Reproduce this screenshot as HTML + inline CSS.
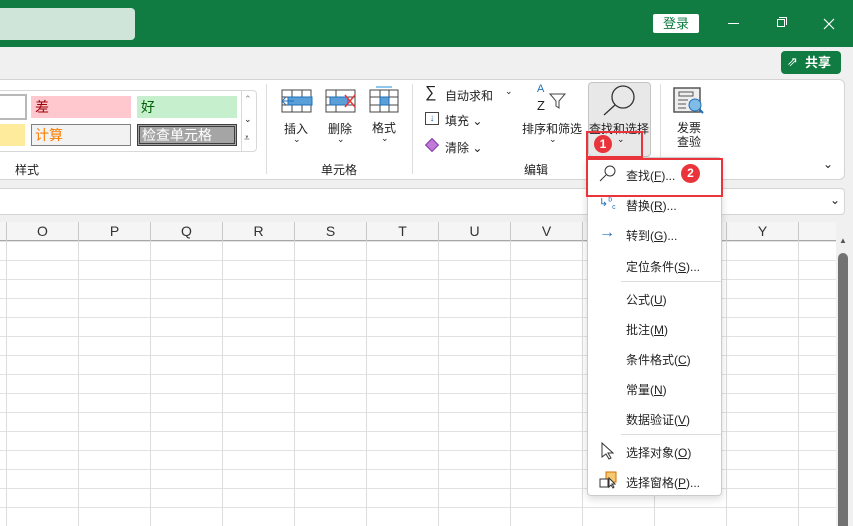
<!DOCTYPE html><html><head><meta charset="utf-8"><style>
*{box-sizing:border-box;margin:0;padding:0}
body{width:853px;height:526px;overflow:hidden;background:#fff;position:relative;font-family:"Liberation Sans","Noto Sans CJK SC",sans-serif;font-size:12px;color:#222}
.a{position:absolute}
.t{position:absolute;white-space:nowrap}
.col{position:absolute;top:222px;height:19px;border-left:1px solid #c8c8c8;width:72px;text-align:center;font-size:14px;line-height:19px;color:#333}
.mi{position:absolute;left:626px;font-size:12px;white-space:nowrap}
u{text-decoration:underline}
</style></head><body>
<div class="a" style="left:0;top:0;width:853px;height:47px;background:#107c41"></div>
<div class="a" style="left:-10px;top:8px;width:145px;height:32px;background:#d0e5da;border-radius:4px"></div>
<div class="a" style="left:653px;top:14px;width:46px;height:19px;background:#fff;border-radius:2px;color:#107c41;font-size:13px;text-align:center;line-height:19px">登录</div>
<div class="a" style="left:728px;top:23px;width:11px;height:1px;background:#fff"></div>
<div class="a" style="left:777px;top:19px;width:8px;height:8px;border:1px solid #fff"></div>
<div class="a" style="left:779px;top:17px;width:8px;height:8px;border-top:1px solid #fff;border-right:1px solid #fff"></div>
<svg class="a" style="left:823px;top:18px" width="12" height="12"><path d="M1 1l10 10M11 1L1 11" stroke="#fff" stroke-width="1.2"/></svg>
<div class="a" style="left:0;top:47px;width:853px;height:175px;background:#f0f0f0"></div>
<div class="a" style="left:781px;top:51px;width:60px;height:23px;background:#107c41;border-radius:4px;color:#fff;font-size:13px;font-weight:bold;line-height:23px;padding-left:24px">共享</div>
<div class="t" style="left:787px;top:54px;color:#fff;font-size:13px">⇗</div>
<!-- ribbon -->
<div class="a" style="left:-5px;top:79px;width:850px;height:101px;background:#fff;border:1px solid #d4d4d4;border-radius:6px"></div>
<div class="a" style="left:-5px;top:90px;width:262px;height:62px;border:1px solid #d8d8d8;border-radius:4px"></div>
<div class="a" style="left:-5px;top:94px;width:32px;height:26px;border:2px solid #b8b8b8;background:#fff"></div>
<div class="a" style="left:0;top:124px;width:25px;height:22px;background:#ffeb9c"></div>
<div class="a" style="left:31px;top:96px;width:100px;height:22px;background:#ffc7ce;color:#9c0006;font-size:14px;padding-left:4px;line-height:22px">差</div>
<div class="a" style="left:137px;top:96px;width:100px;height:22px;background:#c6efce;color:#006100;font-size:14px;padding-left:4px;line-height:22px">好</div>
<div class="a" style="left:31px;top:124px;width:100px;height:22px;background:#f2f2f2;border:1px solid #7f7f7f;color:#fa7d00;font-size:14px;padding-left:3px;line-height:20px">计算</div>
<div class="a" style="left:137px;top:124px;width:100px;height:22px;background:#a5a5a5;border:3px double #3f3f3f;color:#fff;font-size:14px;padding-left:2px;line-height:16px">检查单元格</div>
<div class="a" style="left:241px;top:90px;width:1px;height:62px;background:#d8d8d8"></div>
<div class="t" style="left:244px;top:94px;font-size:9px;color:#888">⌃</div>
<div class="t" style="left:244px;top:114px;font-size:9px">⌄</div>
<div class="t" style="left:244px;top:133px;font-size:10px">⩡</div>
<div class="t" style="left:15px;top:161px">样式</div>
<div class="a" style="left:266px;top:84px;width:1px;height:90px;background:#ddd"></div>
<svg class="a" style="left:280px;top:85px" width="120" height="30"><g fill="none" stroke="#444"><rect x="2" y="5" width="29" height="22"/><line x1="2" y1="12" x2="31" y2="12"/><line x1="2" y1="20" x2="31" y2="20"/><line x1="12" y1="5" x2="12" y2="27"/><line x1="22" y1="5" x2="22" y2="27"/><rect x="46" y="5" width="29" height="22"/><line x1="46" y1="12" x2="75" y2="12"/><line x1="46" y1="20" x2="75" y2="20"/><line x1="56" y1="5" x2="56" y2="27"/><rect x="90" y="5" width="28" height="22"/><line x1="90" y1="12" x2="118" y2="12"/><line x1="90" y1="20" x2="118" y2="20"/><line x1="100" y1="5" x2="100" y2="27"/><line x1="109" y1="5" x2="109" y2="27"/></g><rect x="8" y="12" width="24" height="8" fill="#5a9fd8" stroke="#1f6fb8"/><path d="M2 16h12M6 12l-4 4 4 4" stroke="#1f6fb8" fill="none"/><rect x="50" y="12" width="18" height="8" fill="#5a9fd8" stroke="#1f6fb8"/><path d="M65 10l10 12M75 10l-10 12" stroke="#e33" stroke-width="1.5"/><rect x="100" y="12" width="9" height="8" fill="#5a9fd8" stroke="#1f6fb8"/><path d="M96 2h16" stroke="#1f8fd8"/></svg>
<div class="t" style="left:284px;top:120px">插入</div><div class="t" style="left:293px;top:134px;font-size:9px">⌄</div>
<div class="t" style="left:328px;top:120px">删除</div><div class="t" style="left:337px;top:134px;font-size:9px">⌄</div>
<div class="t" style="left:372px;top:119px">格式</div><div class="t" style="left:381px;top:133px;font-size:9px">⌄</div>
<div class="t" style="left:321px;top:161px">单元格</div>
<div class="a" style="left:412px;top:84px;width:1px;height:90px;background:#ddd"></div>
<div class="t" style="left:425px;top:84px;font-size:16px">∑</div><div class="t" style="left:445px;top:87px">自动求和</div><div class="t" style="left:505px;top:86px;font-size:9px">⌄</div>
<div class="a" style="left:425px;top:112px;width:14px;height:13px;border:1px solid #444;color:#1f6fb8;font-size:10px;line-height:11px;text-align:center">↓</div><div class="t" style="left:445px;top:112px">填充 ⌄</div>
<div class="a" style="left:427px;top:140px;width:10px;height:10px;background:#c07ad8;transform:rotate(45deg);border:1px solid #8b3aa8"></div><div class="t" style="left:445px;top:139px">清除 ⌄</div>
<div class="t" style="left:537px;top:83px;color:#1f6fb8;font-size:11px">A</div><div class="t" style="left:537px;top:98px;font-size:13px">Z</div>
<svg class="a" style="left:548px;top:92px" width="20" height="18"><path d="M2 2h15l-6 7v7l-3-2V9z" fill="none" stroke="#444"/></svg>
<div class="t" style="left:522px;top:120px">排序和筛选</div><div class="t" style="left:549px;top:134px;font-size:9px">⌄</div>
<div class="t" style="left:524px;top:161px">编辑</div>
<div class="a" style="left:588px;top:82px;width:63px;height:75px;background:#e8e8e8;border:1px solid #c4c4c4;border-radius:4px"></div>
<svg class="a" style="left:600px;top:84px" width="40" height="32"><circle cx="23" cy="13" r="11" fill="none" stroke="#333" stroke-width="1.3"/><line x1="15" y1="21" x2="4" y2="31" stroke="#333" stroke-width="1.3"/></svg>
<div class="t" style="left:589px;top:120px">查找和选择</div><div class="t" style="left:617px;top:134px;font-size:9px">⌄</div>
<div class="a" style="left:660px;top:84px;width:1px;height:90px;background:#ddd"></div>
<svg class="a" style="left:672px;top:86px" width="34" height="30"><rect x="2" y="2" width="26" height="24" fill="#eee" stroke="#555" stroke-width="1.5"/><rect x="7" y="6" width="14" height="4" fill="none" stroke="#555"/><path d="M6 14h10M6 18h8M6 22h8" stroke="#555"/><circle cx="23" cy="19" r="6" fill="#7fbde8" stroke="#1f6fb8"/><line x1="27" y1="23" x2="31" y2="27" stroke="#1f6fb8" stroke-width="2"/></svg>
<div class="t" style="left:677px;top:119px">发票</div><div class="t" style="left:677px;top:133px">查验</div>
<div class="t" style="left:823px;top:157px;font-size:12px">⌄</div>
<div class="a" style="left:-5px;top:188px;width:850px;height:27px;background:#fff;border:1px solid #d4d4d4;border-radius:4px"></div>
<div class="t" style="left:830px;top:193px;font-size:12px">⌄</div>
<div class="a" style="left:0;top:222px;width:836px;height:19px;background:#f5f5f5;border-bottom:1px solid #a8a8a8"></div>
<div class="col" style="left:6px">O</div><div class="col" style="left:78px">P</div><div class="col" style="left:150px">Q</div><div class="col" style="left:222px">R</div><div class="col" style="left:294px">S</div><div class="col" style="left:366px">T</div><div class="col" style="left:438px">U</div><div class="col" style="left:510px">V</div><div class="col" style="left:582px">W</div><div class="col" style="left:654px">X</div><div class="col" style="left:726px">Y</div><div class="col" style="left:798px"></div>
<div class="a" style="left:0;top:241px;width:836px;height:285px;background-image:linear-gradient(to right,#dcdcdc 1px,transparent 1px),linear-gradient(to bottom,transparent 18px,#e2e2e2 18px);background-size:72px 19px,100% 19px;background-position:6px 0,0 1px"></div>
<div class="a" style="left:836px;top:222px;width:17px;height:304px;background:#f0f0f0"></div>
<div class="t" style="left:839px;top:236px;font-size:8px;color:#555">▲</div>
<div class="a" style="left:838px;top:253px;width:10px;height:273px;background:#727272;border-radius:5px 5px 0 0"></div>
<div class="a" style="left:587px;top:157px;width:135px;height:339px;background:#fff;border:1px solid #ccc;border-radius:4px;box-shadow:0 3px 8px rgba(0,0,0,.15)"></div>
<svg class="a" style="left:598px;top:164px" width="20" height="20"><circle cx="12" cy="7" r="5" fill="none" stroke="#333"/><line x1="8" y1="11" x2="2" y2="17" stroke="#333"/></svg>
<div class="mi" style="top:167px">查找(<u>F</u>)...</div>
<div class="t" style="left:599px;top:196px;color:#1f6fb8;font-size:11px">↳<sup style="font-size:7px">b</sup><sub style="font-size:7px">c</sub></div>
<div class="mi" style="top:197px">替换(<u>R</u>)...</div>
<div class="t" style="left:599px;top:224px;color:#1f6fb8;font-size:16px">→</div>
<div class="mi" style="top:227px">转到(<u>G</u>)...</div>
<div class="mi" style="top:258px">定位条件(<u>S</u>)...</div>
<div class="a" style="left:621px;top:281px;width:100px;height:1px;background:#ddd"></div>
<div class="mi" style="top:291px">公式(<u>U</u>)</div>
<div class="mi" style="top:321px">批注(<u>M</u>)</div>
<div class="mi" style="top:351px">条件格式(<u>C</u>)</div>
<div class="mi" style="top:381px">常量(<u>N</u>)</div>
<div class="mi" style="top:411px">数据验证(<u>V</u>)</div>
<div class="a" style="left:621px;top:434px;width:100px;height:1px;background:#ddd"></div>
<svg class="a" style="left:600px;top:442px" width="16" height="18"><path d="M2 1v14l4-3 3 5 2-1-3-5h5z" fill="#fff" stroke="#333"/></svg>
<div class="mi" style="top:444px">选择对象(<u>O</u>)</div>
<svg class="a" style="left:599px;top:471px" width="20" height="18"><rect x="7" y="1" width="10" height="10" fill="#f8c870" stroke="#d07000"/><rect x="1" y="8" width="8" height="8" fill="#fff" stroke="#333"/><path d="M10 7v9l2-2 2 3 1-1-2-3h3z" fill="#fff" stroke="#333"/></svg>
<div class="mi" style="top:474px">选择窗格(<u>P</u>)...</div>
<div class="a" style="left:586px;top:131px;width:57px;height:27px;border:2px solid #e8343a"></div>
<div class="a" style="left:586px;top:158px;width:137px;height:39px;border:2px solid #e8343a"></div>
<div class="a" style="left:594px;top:135px;width:18px;height:18px;border-radius:50%;background:#e8343a;color:#fff;font-size:12px;font-weight:bold;text-align:center;line-height:18px">1</div>
<div class="a" style="left:681px;top:164px;width:19px;height:19px;border-radius:50%;background:#e8343a;color:#fff;font-size:12px;font-weight:bold;text-align:center;line-height:19px">2</div>
</body></html>
